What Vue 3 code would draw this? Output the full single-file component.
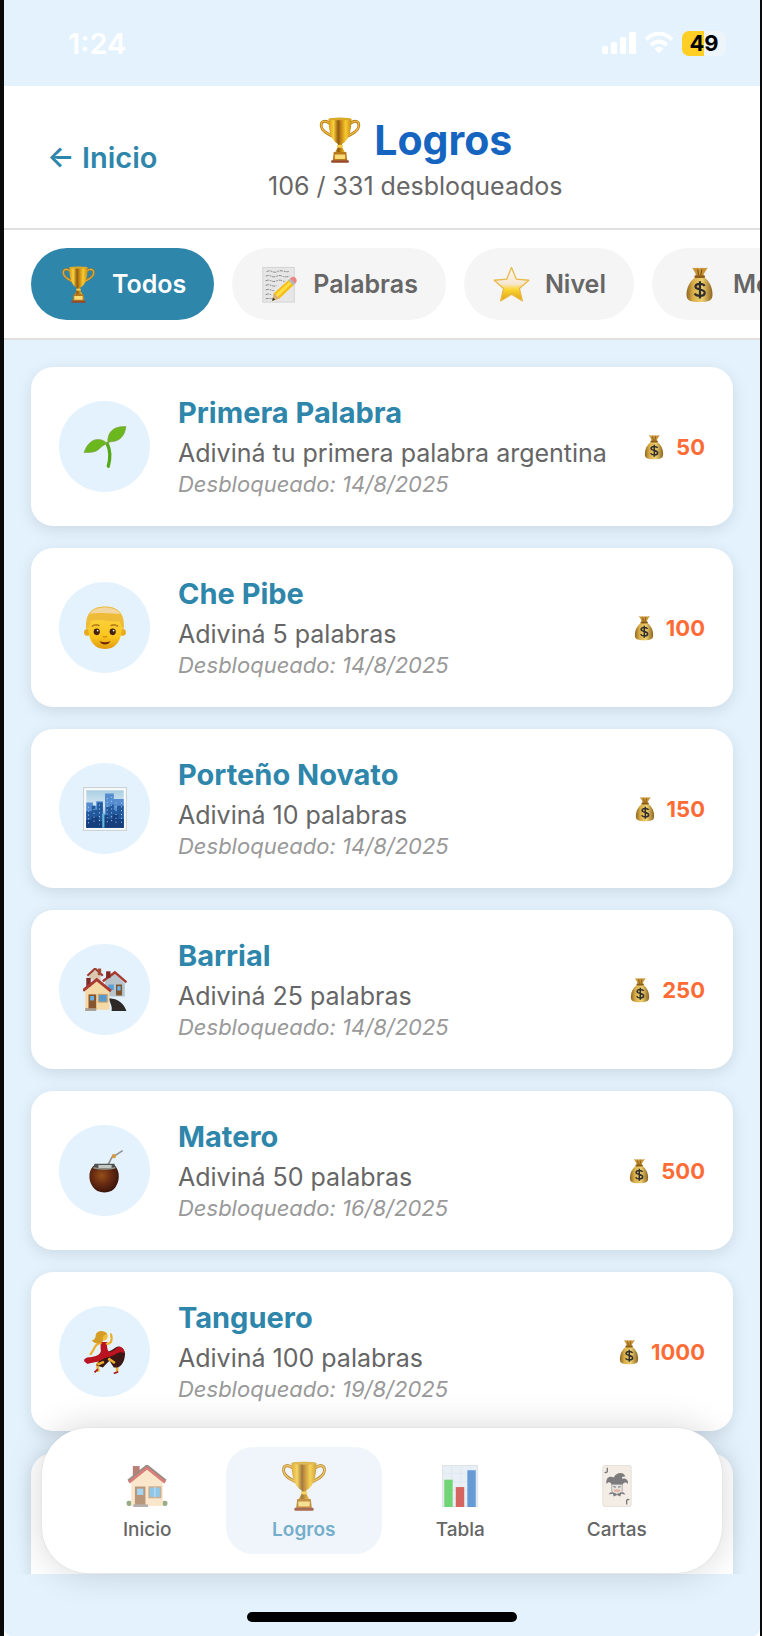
<template>
  <div class="device">
    <!-- shared drawings -->
    <svg class="sprite" aria-hidden="true">
      <defs>
        <linearGradient id="gold" x1="0" x2="1" y1="0" y2="0">
          <stop offset="0" stop-color="#d99a12" />
          <stop offset="0.22" stop-color="#f9cf3c" />
          <stop offset="0.42" stop-color="#8f5a10" />
          <stop offset="0.56" stop-color="#c98a14" />
          <stop offset="0.75" stop-color="#f7cb30" />
          <stop offset="1" stop-color="#c88a12" />
        </linearGradient>
        <linearGradient id="starFill" x1="0" x2="0" y1="0" y2="1">
          <stop offset="0" stop-color="#fdfcf8" />
          <stop offset="0.5" stop-color="#f6e6cf" />
          <stop offset="0.65" stop-color="#fbd634" />
          <stop offset="1" stop-color="#e0a010" />
        </linearGradient>
        <linearGradient id="bagFill" x1="0" x2="1" y1="0" y2="0">
          <stop offset="0" stop-color="#8e6420" />
          <stop offset="0.25" stop-color="#d9ae48" />
          <stop offset="0.6" stop-color="#edd070" />
          <stop offset="1" stop-color="#8e6420" />
        </linearGradient>
        <linearGradient id="skin" x1="0" x2="0" y1="0" y2="1">
          <stop offset="0" stop-color="#fcd650" />
          <stop offset="0.7" stop-color="#fbc61c" />
          <stop offset="1" stop-color="#e09a10" />
        </linearGradient>
        <linearGradient id="sky" x1="0" x2="0" y1="0" y2="1">
          <stop offset="0" stop-color="#a9cfe2" />
          <stop offset="0.4" stop-color="#d5e6f4" />
          <stop offset="1" stop-color="#4d86c4" />
        </linearGradient>
        <radialGradient id="gourd" cx="0.42" cy="0.4" r="0.6">
          <stop offset="0" stop-color="#96501a" />
          <stop offset="0.5" stop-color="#6a2c12" />
          <stop offset="1" stop-color="#3c160c" />
        </radialGradient>
      </defs>

      <symbol id="trophy" viewBox="0 0 38 42">
        <g transform="scale(0.95 1.05)">
          <path d="M10 5.500C5 2 1.200 4 2 8.200C2.800 12.500 8 14.500 12.500 16.500M30 5.500C35 2 38.800 4 38 8.200C37.200 12.500 32 14.500 27.500 16.500" fill="none" stroke="#b87d18" stroke-width="2.600" />
          <path d="M10 5.500C5 2 1.200 4 2 8.200C2.800 12.500 8 14.500 12.500 16.500M30 5.500C35 2 38.800 4 38 8.200C37.200 12.500 32 14.500 27.500 16.500" fill="none" stroke="#eec04a" stroke-width="1" />
          <path d="M9 1.500H31C31 12 29 20 22 23.500V26L25 31H15L18 26V23.500C11 20 9 12 9 1.500Z" fill="url(#gold)" />
          <ellipse cx="20" cy="1.700" rx="11" ry="1.200" fill="#d9a92a" />
          <ellipse cx="20" cy="25.500" rx="3" ry="1.300" fill="#f6cf4c" />
          <path d="M14 30.500H26L27 38H13Z" fill="#b87a1c" />
          <rect x="15" y="32.500" width="10" height="4" rx="0.600" fill="#f8dc78" />
          <rect x="11.500" y="37.500" width="17" height="2.300" rx="0.800" fill="#98482a" />
        </g>
      </symbol>

      <symbol id="memo" viewBox="0 0 40 40">
        <rect x="2" y="1.500" width="34" height="37.500" fill="#e6e6e6" stroke="#d2d2d2" />
        <g fill="none" stroke="#777" stroke-width="0.900" stroke-dasharray="3.500 1 2 0.800">
          <path d="M6 6q3 -1.500 6 0t6 0t6 -0.500t6 0.500" />
          <path d="M5 11q3 -1.500 6 0t6 0t6 0t8 0" />
          <path d="M5 16q3 -1.500 6 0t6 0t6 0t3 0" />
          <path d="M5 21q3 -1.500 6 0t6 0" />
          <path d="M5 26q3 -1.500 6 0t3 0" />
          <path d="M5 31q3 -1.500 6 0" />
          <path d="M5 35.500q3 -1 7 0" />
        </g>
        <path d="M12 37.500L14 29.500L31 14L36.500 19.500L20 35Z" fill="#f7bd16" />
        <path d="M15.500 31L32.500 15.500L34.500 17.500L18 33.500Z" fill="#ffde43" />
        <path d="M12 37.500L14 29.500L20 35Z" fill="#d8b27a" />
        <path d="M12 37.500L12.900 34L15.500 36.400Z" fill="#333" />
        <path d="M29.500 15.300L32 13L37.500 18.500L35 21Z" fill="#b3b8ba" />
        <path d="M31.500 13.500C33.500 11 36 11.500 37.500 13C39 15 39 17 37.200 18.800Z" fill="#ec8580" />
      </symbol>

      <symbol id="star" viewBox="0 0 40 40">
        <path d="M20 1.500L25.200 14.300L38.800 15.400L28.500 24.200L31.800 37.800L20 30.600L8.200 37.800L11.500 24.200L1.200 15.400L14.800 14.300Z" fill="url(#starFill)" stroke="#e9b949" stroke-width="1.400" stroke-linejoin="round" />
      </symbol>

      <symbol id="bag" viewBox="0 0 30 40">
        <path d="M7 1.500C10 3.500 12 0.500 15 2.500C18 0.500 20 3.500 24 1.500C22 5 19.500 7.500 19 11H11.500C11 7.500 9 5 7 1.500Z" fill="#c89438" />
        <path d="M13 4L14 10M17.500 4L16.500 10" stroke="#7a5010" stroke-width="1.200" />
        <path d="M11 11.500H19.500C26 16 29.500 24 29 32C28.600 37.500 25 39 15 39C5 39 1.400 37.500 1 32C0.500 24 4.500 16 11 11.500Z" fill="url(#bagFill)" />
        <rect x="9.500" y="10" width="11.500" height="3" rx="1.500" fill="#8b5c18" />
        <path d="M20.500 21.500C19 18.600 11 18.200 10.600 22.200C10.300 26.200 20.800 24.600 20.600 29C20.400 33.300 11.500 33 9.800 29.600M15.500 16.500V35" fill="none" stroke="#322e2c" stroke-width="2.400" />
      </symbol>

      <symbol id="seedling" viewBox="0 0 40 40">
        <path d="M22 17C25 23 25 30 23 37.500" fill="none" stroke="#55a818" stroke-width="3" stroke-linecap="round" />
        <path d="M22.500 17C15 10 5 12.500 1 25C8 25 12 24.500 15 21.500C17.500 19 19.500 17.500 22.500 17Z" fill="#6ab81e" stroke="#869c4a" stroke-width="0.600" />
        <path d="M22.500 16.500C22 6 28 1 39 1.500C38 10 33 14.500 27 15C25 15.200 23.500 15.500 22.500 16.500Z" fill="#6ab81e" stroke="#869c4a" stroke-width="0.600" />
      </symbol>

      <symbol id="boy" viewBox="0 0 40 40">
        <circle cx="4" cy="24" r="3" fill="#e8aa20" />
        <circle cx="36" cy="24" r="3" fill="#e8aa20" />
        <path d="M4.500 17C4.500 6 11 2 20 2C29 2 35.500 6 35.500 17C35.500 30 31 39 20 39C9 39 4.500 30 4.500 17Z" fill="url(#skin)" />
        <path d="M3 22C1.500 8 7 0.500 20 0.500C33 0.500 38.500 8 37 22C35 20 35 17 33.500 14C24 14.500 14 11.500 7.500 13.500C6 16 5.500 20 3 22Z" fill="#eebc38" />
        <path d="M6 7C11 -0.500 29 -0.500 34 7C26 7.500 14 5.500 6 7Z" fill="#f3d6a0" />
        <path d="M8 18.500Q11.500 16 15 18M25 18Q28.500 16 32 18.500" fill="none" stroke="#b8801c" stroke-width="1.500" />
        <ellipse cx="12.500" cy="23.500" rx="2.800" ry="3" fill="#43200e" />
        <ellipse cx="27" cy="23.500" rx="2.800" ry="3" fill="#43200e" />
        <circle cx="13.300" cy="22.300" r="0.800" fill="#fff" />
        <circle cx="27.800" cy="22.300" r="0.800" fill="#fff" />
        <path d="M18 27.500Q20 29 22 27.500" fill="none" stroke="#d88a14" stroke-width="1.300" />
        <path d="M15 32Q20 34 25 32Q23 35 20 35T15 32Z" fill="#6c2411" />
      </symbol>

      <symbol id="city" viewBox="0 0 40 40">
        <rect x="0.500" y="0.500" width="39" height="39" fill="#fafafa" stroke="#ccd2d5" />
        <rect x="3" y="3" width="34" height="34" fill="url(#sky)" />
        <path d="M3 14H9V17H12V13H18V37H3ZM20 6H28V11H37V37H20Z" fill="#568dd0" />
        <path d="M3 22H8V17H11V21H13V14H18V25H21V18H25V16H28V21H31V17H37V37H3Z" fill="#23589c" />
        <path d="M3 30H8V27H14V31H18V26H23V29H27V25H32V29H37V37H3Z" fill="#163e7c" />
        <path d="M17.500 24H19.500V37H17.500Z" fill="#66b8dc" />
        <path d="M5 18v16M10 20v14M15 16v18M22 10v24M26 9v24M30 14v20M35 14v20" stroke="#9fd0ec" stroke-width="0.900" stroke-dasharray="1 2.500" />
      </symbol>

      <symbol id="houses" viewBox="0 0 40 40">
        <path d="M6 10V5L11 2L16 6V12Z" fill="#dcc7b0" />
        <path d="M4 7L11 0.500L18 7" fill="none" stroke="#9e4032" stroke-width="2" />
        <rect x="13.500" y="0.500" width="3" height="6" fill="#a34a38" />
        <path d="M20 12L29 5L38 14V26H20Z" fill="#b8c4cc" />
        <path d="M18 12L29 4L39.500 13" fill="none" stroke="#a83a32" stroke-width="2.200" />
        <rect x="21" y="3" width="4" height="6" fill="#7e2c24" />
        <rect x="30" y="15" width="5.500" height="10" fill="#80552e" />
        <rect x="31.200" y="16.500" width="3" height="4" fill="#65b5ea" />
        <rect x="23" y="15" width="5" height="5" fill="#5aa0d6" />
        <path d="M2 20L12 11L24 21V38H2Z" fill="#f4d8a6" />
        <rect x="3" y="9" width="4" height="8" fill="#7e2c24" />
        <path d="M0 20.500L12.500 10.500L25.500 21" fill="none" stroke="#a83a32" stroke-width="2.600" />
        <rect x="5" y="24" width="7" height="13.500" fill="#89552c" />
        <rect x="6.500" y="25.500" width="3.500" height="4" fill="#65b5ea" />
        <rect x="14" y="24" width="8" height="7" fill="#5599cf" stroke="#caa36c" />
        <rect x="2" y="36.500" width="10" height="2.500" fill="#a79b8c" />
        <path d="M24 27.500C32 28 37 32 39.500 39H26C27 34 24 32 24 27.500Z" fill="#2e2927" />
      </symbol>

      <symbol id="mate" viewBox="0 0 40 40">
        <path d="M23 14L26 8L36 1.500" fill="none" stroke="#929292" stroke-width="1.500" />
        <circle cx="28" cy="6.500" r="2" fill="#d39a45" />
        <path d="M11 14C5 18 4.500 27 8 33C11 38 15 39.500 19.500 39.500C24 39.500 28 38 30.500 33C34 27 33 18 28 14Z" fill="url(#gourd)" />
        <path d="M10.500 13.500H28.500L29.500 17H9.500Z" fill="#4f524e" />
        <path d="M14 14.500H26V17.500H14Z" fill="#c2c9c4" />
        <path d="M9.500 17Q19.500 19.500 29.500 17" fill="none" stroke="#8f9690" stroke-width="1.300" />
      </symbol>

      <symbol id="dancer" viewBox="0 0 40 40">
        <!-- legs and shoes -->
        <path d="M17 27L13 31L14 38M24 26L31 31L31 38" fill="none" stroke="#eeb034" stroke-width="2.400" stroke-linejoin="round" />
        <path d="M10.500 38.500L13.500 35.500M28 39.500L32 38" stroke="#a51420" stroke-width="1.600" />
        <!-- skirt -->
        <path d="M20 20C26 20 28 16 32 15C37 16 39 20 38 24C37 31 33 35 28 34L24 28L18 34L12 32Z" fill="#3b1716" />
        <path d="M16 11H22C21.500 15 22 18 23.500 20C28 20 30 16 33 15C36 15.500 38 18 37.500 21C34 19 31 21 28 23C24 25 20 25 17 27C13 30 8 29 4 31C3 29 1 30 1 27C3 24 7 25 10 24C15 23 17 20 16 17Z" fill="#ba1420" />
        <path d="M19 29L13 31.500M23 26L29 30" stroke="#eeb034" stroke-width="2.400" />
        <!-- arms, head and hair -->
        <path d="M16 12C12 12 11 15 9.500 18L7 22M21.500 12.500C25 13 27 10 25.500 4" fill="none" stroke="#efae2c" stroke-width="2" stroke-linecap="round" />
        <circle cx="18.500" cy="5.500" r="4" fill="#f4bd38" />
        <path d="M22 3.500C19 -0.500 12 0 11.500 5C11.500 8 10 9 8 9.500C11 13 16 13 18.500 9.500C17 8 17.500 5 22 3.500Z" fill="#d59c26" />
      </symbol>

      <symbol id="house" viewBox="0 0 40 40">
        <rect x="0.500" y="34" width="5" height="5" rx="2" fill="#6d8a54" />
        <rect x="34.500" y="34" width="5" height="5" rx="2" fill="#6d8a54" />
        <rect x="6.500" y="1" width="6.500" height="10" fill="#9c4b3d" />
        <path d="M5 15L20 2L35 15V39H5Z" fill="#f7dcb6" />
        <path d="M2.500 15.500L20 1.500L37.500 15.500" fill="none" stroke="#6a5c54" stroke-width="3.600" />
        <path d="M2.800 16.500L20 2.800L37.200 16.500" fill="none" stroke="#c9483f" stroke-width="2.600" />
        <rect x="8.500" y="20.500" width="10" height="18.500" fill="#9a6a42" />
        <rect x="10.500" y="22.500" width="6" height="6" fill="#7cc2ee" />
        <rect x="22" y="21" width="11" height="10" fill="#62b0df" stroke="#b08c64" stroke-width="1.400" />
        <path d="M27.500 21V31" stroke="#a6d6ee" />
        <rect x="7" y="37.500" width="14" height="2.500" fill="#968e8c" />
      </symbol>

      <symbol id="chart" viewBox="0 0 34 40">
        <rect x="0.500" y="0.500" width="33" height="39" fill="#dfe9f2" stroke="#cfd6da" />
        <path d="M0 8H34M0 16H34M0 24H34M0 32H34M9 0V40M18 0V40M27 0V40" stroke="#cbdbe8" stroke-width="0.600" />
        <rect x="2" y="14" width="8" height="26" fill="#37c43c" />
        <rect x="13" y="21" width="8" height="19" fill="#c3241f" />
        <rect x="24" y="5" width="8" height="35" fill="#2470c4" />
      </symbol>

      <symbol id="joker" viewBox="0 0 28 40">
        <rect x="0.500" y="0.500" width="27" height="39" rx="2.500" fill="#efe6dc" stroke="#ddd4ca" />
        <path d="M4.800 2.500V6.200Q4 8 2.300 6.800M23.200 37.500V33.800Q24 32 25.700 33.200" fill="none" stroke="#424242" stroke-width="1.300" />
        <path d="M4 18C3 12 7 10 11 12C13 7 20 6 22 11C19 10.500 18 12 19 13C23 12 25 15 24.500 18C22 15.500 20 17 19 19H9C8 16 6 15.500 4 18Z" fill="#454649" />
        <path d="M9 18.500H19V25Q14 31 9 25Z" fill="#ddd8d5" stroke="#777" stroke-width="0.700" />
        <path d="M10.500 20.500L13 21.200M17.500 20.500L15 21.200" stroke="#444" stroke-width="1" />
        <path d="M10.500 24Q14 21.500 17.500 24L16 26H12Z" fill="#da9e82" />
        <path d="M6 28C8 24.500 11 26 14 28C17 26 20 24.500 22 28L18 27.500L17 30L14 28.500L11 30L10 27.500Z" fill="#454649" />
      </symbol>
    </svg>

    <div class="app">
      <div class="status-bar">
        <span class="clock">1:24</span>
        <div class="status-icons">
          <svg class="signal" viewBox="0 0 34 22" aria-hidden="true">
            <rect x="0" y="14" width="6" height="8" rx="1.500" />
            <rect x="9" y="10" width="6" height="12" rx="1.500" />
            <rect x="18" y="5" width="6" height="17" rx="1.500" />
            <rect x="27" y="0" width="7" height="22" rx="1.500" />
          </svg>
          <svg class="wifi" viewBox="0 0 30 22" aria-hidden="true">
            <path d="M2 7.500Q15 -4.500 28 7.500M7 13Q15 6 23 13" fill="none" stroke="#fff" stroke-width="4" />
            <path d="M10.500 16.500Q15 13 19.500 16.500L15 21.500Z" fill="#fff" />
          </svg>
          <div class="battery">49</div>
        </div>
      </div>

      <header class="header">
        <a class="back" href="#inicio">← Inicio</a>
        <div class="heading">
          <h1>
            <svg class="title-icon" aria-hidden="true"><use href="#trophy" /></svg>
            Logros
          </h1>
          <p>106 / 331 desbloqueados</p>
        </div>
        <div class="spacer"></div>
      </header>

      <div class="filters">
        <button
          v-for="f in filters"
          :key="f.name"
          type="button"
          class="pill"
          :class="{ active: filter === f.name }"
          @click="filter = f.name"
        >
          <svg aria-hidden="true"><use :href="'#' + f.icon" /></svg>
          {{ f.name }}
        </button>
      </div>

      <ul class="list">
        <li v-for="a in achievements" :key="a.title" class="card">
          <div class="badge">
            <svg aria-hidden="true"><use :href="'#' + a.icon" /></svg>
          </div>
          <div class="info">
            <h2>{{ a.title }}</h2>
            <p class="desc">{{ a.desc }}</p>
            <p class="date">Desbloqueado: {{ a.date }}</p>
          </div>
          <div class="reward">
            <svg aria-hidden="true"><use href="#bag" /></svg>
            {{ a.coins }}
          </div>
        </li>
        <li class="card"></li>
      </ul>

      <div class="bottom">
        <nav class="nav">
          <a
            v-for="n in navItems"
            :key="n.name"
            :href="'#' + n.name.toLowerCase()"
            class="nav-item"
            :class="{ active: n.name === 'Logros' }"
          >
            <svg aria-hidden="true"><use :href="'#' + n.icon" /></svg>
            <span>{{ n.name }}</span>
          </a>
        </nav>
        <div class="home-indicator"></div>
      </div>
    </div>
  </div>
</template>

<script setup>
import { ref } from 'vue'

const filter = ref('Todos')

const filters = [
  { name: 'Todos', icon: 'trophy' },
  { name: 'Palabras', icon: 'memo' },
  { name: 'Nivel', icon: 'star' },
  { name: 'Monedas', icon: 'bag' }
]

const achievements = [
  { title: 'Primera Palabra', desc: 'Adiviná tu primera palabra argentina', date: '14/8/2025', coins: 50, icon: 'seedling' },
  { title: 'Che Pibe', desc: 'Adiviná 5 palabras', date: '14/8/2025', coins: 100, icon: 'boy' },
  { title: 'Porteño Novato', desc: 'Adiviná 10 palabras', date: '14/8/2025', coins: 150, icon: 'city' },
  { title: 'Barrial', desc: 'Adiviná 25 palabras', date: '14/8/2025', coins: 250, icon: 'houses' },
  { title: 'Matero', desc: 'Adiviná 50 palabras', date: '16/8/2025', coins: 500, icon: 'mate' },
  { title: 'Tanguero', desc: 'Adiviná 100 palabras', date: '19/8/2025', coins: 1000, icon: 'dancer' }
]

const navItems = [
  { name: 'Inicio', icon: 'house' },
  { name: 'Logros', icon: 'trophy' },
  { name: 'Tabla', icon: 'chart' },
  { name: 'Cartas', icon: 'joker' }
]
</script>

<style>
body {
  margin: 0;
  background: #fff;
}
</style>

<style scoped>
* {
  box-sizing: border-box;
}
h1, h2, p, ul {
  margin: 0;
  padding: 0;
}
.device {
  border-left: 4px solid #0a0a0a;
  border-right: 2px solid #0a0a0a;
  font-family: Inter, "Liberation Sans", sans-serif;
}
.sprite {
  position: absolute;
  width: 0;
  height: 0;
}
.app {
  display: flex;
  flex-direction: column;
  height: 100vh;
  background: #e3f2fd;
  border-radius: 0 0 8px 8px;
  overflow: hidden;
}

/* status bar */
.status-bar {
  flex: none;
  display: flex;
  align-items: center;
  justify-content: space-between;
  height: 86px;
  padding: 0 34px 0 64px;
}
.clock {
  font-size: 29px;
  font-weight: 600;
  color: #fff;
}
.status-icons {
  display: flex;
  align-items: center;
  gap: 8px;
}
.signal {
  width: 34px;
  height: 22px;
  fill: #fff;
}
.wifi {
  width: 30px;
  height: 22px;
}
.battery {
  width: 44px;
  height: 25px;
  border-radius: 7px;
  background: linear-gradient(to right, #ffcf26 50%, #edf4fa 50%);
  font-size: 22px;
  line-height: 25px;
  font-weight: 700;
  text-align: center;
  color: #000;
}

/* header */
.header {
  flex: none;
  display: flex;
  align-items: center;
  padding: 28px 27px 26px;
  background: #fff;
  border-bottom: 2px solid #e0e0e0;
}
.back {
  padding: 0 16px;
  font-size: 29px;
  line-height: 34px;
  font-weight: 600;
  color: #2e86ab;
  text-decoration: none;
}
.heading {
  flex: 1;
  text-align: center;
}
.heading h1 {
  display: flex;
  align-items: center;
  justify-content: center;
  gap: 12px;
  margin-bottom: 4px;
  font-size: 41px;
  line-height: 52px;
  font-weight: 700;
  color: #1565c0;
}
.title-icon {
  width: 44px;
  height: 46px;
}
.heading p {
  font-size: 25px;
  line-height: 32px;
  color: #666;
}
.spacer {
  width: 76px;
}

/* filters */
.filters {
  flex: none;
  display: flex;
  gap: 18px;
  padding: 18px 27px;
  background: #fff;
  border-bottom: 2px solid #e0e0e0;
  overflow: hidden;
}
.pill {
  flex: none;
  display: flex;
  align-items: center;
  gap: 14px;
  height: 72px;
  padding: 0 28px;
  border: 0;
  border-radius: 36px;
  background: #f5f5f5;
  font-family: inherit;
  font-size: 25px;
  font-weight: 600;
  color: #666;
  cursor: pointer;
}
.pill svg {
  width: 39px;
  height: 37px;
}
.pill.active {
  background: #2e86ab;
  color: #fff;
}

/* achievements */
.list {
  flex: 1;
  min-height: 0;
  display: flex;
  flex-direction: column;
  gap: 22px;
  padding: 27px 27px 0;
  list-style: none;
  overflow: hidden;
}
.card {
  flex: none;
  display: flex;
  align-items: center;
  gap: 28px;
  min-height: 159px;
  padding: 28px;
  border-radius: 22px;
  background: #fff;
  box-shadow: 0 4px 16px rgba(0, 0, 0, 0.1);
}
.badge {
  flex: none;
  display: flex;
  align-items: center;
  justify-content: center;
  width: 91px;
  height: 91px;
  border-radius: 50%;
  background: #e3f2fd;
}
.badge svg {
  width: 44px;
  height: 44px;
}
.info {
  flex: 1;
  white-space: nowrap;
}
.info h2 {
  margin-bottom: 6px;
  font-size: 29px;
  line-height: 36px;
  font-weight: 700;
  color: #2e86ab;
}
.desc {
  margin-bottom: 2px;
  font-size: 25px;
  line-height: 32px;
  color: #666;
}
.date {
  font-size: 22px;
  line-height: 27px;
  font-style: italic;
  color: #999;
}
.reward {
  display: flex;
  align-items: center;
  gap: 12px;
  font-size: 22px;
  font-weight: 700;
  color: #ff6b35;
}
.reward svg {
  width: 20px;
  height: 26px;
}

/* bottom navigation */
.bottom {
  flex: none;
  position: relative;
  display: flex;
  align-items: flex-end;
  justify-content: center;
  height: 62px;
  padding-bottom: 14px;
}
.nav {
  position: absolute;
  bottom: 63px;
  left: 38px;
  right: 38px;
  display: flex;
  padding: 19px 27px;
  border-radius: 46px;
  background: #fff;
  box-shadow: 0 0 2px rgba(0, 0, 0, 0.1), 0 0 36px rgba(0, 0, 0, 0.16);
}
.nav-item {
  flex: 1;
  display: flex;
  flex-direction: column;
  align-items: center;
  gap: 10px;
  height: 107px;
  padding-top: 18px;
  border-radius: 27px;
  font-size: 19px;
  line-height: 26px;
  font-weight: 500;
  color: #666;
  text-decoration: none;
}
.nav-item svg {
  width: 42px;
  height: 42px;
  opacity: 0.7;
}
.nav-item.active {
  gap: 6px;
  padding-top: 14px;
  background: #eff5fa;
  font-weight: 600;
  color: #74aecb;
}
.nav-item.active svg {
  width: 50px;
  height: 50px;
  opacity: 0.8;
}
.home-indicator {
  width: 270px;
  height: 10px;
  border-radius: 5px;
  background: #000;
}
</style>
